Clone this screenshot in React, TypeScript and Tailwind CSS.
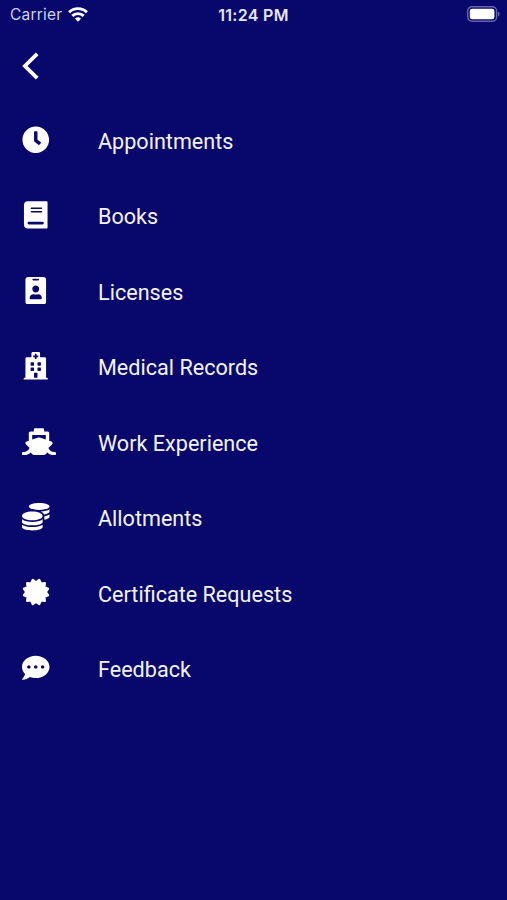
import {
  FaClock,
  FaCoins,
  FaCommentDots,
  FaHospital,
  FaIdBadge,
  FaShip,
} from "react-icons/fa";

function BookIcon({ className }: { className?: string }) {
  return (
    <svg viewBox="0 0 28 28" className={className} fill="none" stroke="#08076b" strokeLinecap="round">
      <path d="M6 .2h19q1 0 1 1V27q0 .9-1 .9H6q-4 0-4-4V4.2q0-4 4-4Z" fill="white" stroke="none" />
      <path d="M9.6 7.3h10.2M9.6 11h10.2" strokeWidth="1.6" />
      <path d="M7 22.5h13.8" strokeWidth="2.8" />
    </svg>
  );
}

// Twelve-toothed seal with blunt tips
function SealIcon({ className }: { className?: string }) {
  return (
    <svg viewBox="-14 -14 28 28" className={className} fill="white" stroke="white" strokeWidth="2.4" strokeLinejoin="round">
      <path d="M0-9.6 3.2-12 5-8.3 8.8-8.8 8.3-5 12-3.2 9.6 0 12 3.2 8.3 5 8.8 8.8 5 8.3 3.2 12 0 9.6-3.2 12-5 8.3-8.8 8.8-8.3 5-12 3.2-9.6 0-12-3.2-8.3-5-8.8-8.8-5-8.3-3.2-12Z" />
    </svg>
  );
}

const items = [
  { label: "Appointments", Icon: FaClock, size: "size-[27.5px]" },
  { label: "Books", Icon: BookIcon, size: "size-[27.5px]" },
  { label: "Licenses", Icon: FaIdBadge, size: "size-[27.5px]" },
  { label: "Medical Records", Icon: FaHospital, size: "size-[27.5px]" },
  { label: "Work Experience", Icon: FaShip, size: "h-[27.5px] w-[34px]" },
  { label: "Allotments", Icon: FaCoins, size: "size-[27.5px]" },
  { label: "Certificate Requests", Icon: SealIcon, size: "size-[28px]" },
  { label: "Feedback", Icon: FaCommentDots, size: "size-[27.5px]" },
];

function StatusBar() {
  return (
    <header className="grid h-[30px] grid-cols-3 items-center pr-[7px] pl-[10px] font-[Inter,sans-serif] text-[15.5px]">
      <div className="flex items-center gap-[6px] text-[#d0d0ee]">
        <span className="tracking-[0.2px]">Carrier</span>
        <svg viewBox="0 0 20 15" className="mb-px h-[15px] w-5" fill="none" stroke="white" strokeWidth="2.9">
          <path d="M1.1 5.3a12.7 12.7 0 0 1 17.8 0" />
          <path d="M4.3 8.9a8.2 8.2 0 0 1 11.4 0" />
          <path d="M10 14.8 7 11.7a4.3 4.3 0 0 1 6 0Z" fill="white" stroke="none" />
        </svg>
      </div>
      <span className="pr-[3px] text-center text-[16px] font-semibold tracking-[0.3px] whitespace-nowrap text-[#e6e6fa]">
        11:24 PM
      </span>
      <svg viewBox="0 0 33 16" className="mb-[2px] h-4 w-[33px] justify-self-end">
        <rect x="0.7" y="0.7" width="28.9" height="14.6" rx="4.2" fill="none" stroke="#6664ae" strokeWidth="1.4" />
        <rect x="2.8" y="2.7" width="24.6" height="10.6" rx="2.3" fill="white" />
        <path d="M30.9 5.4q1.7.8 1.7 2.6t-1.7 2.6Z" fill="#6664ae" />
      </svg>
    </header>
  );
}

export default function App() {
  return (
    <main className="h-[900px] w-[507px] overflow-hidden bg-[#08076b] font-[Roboto,sans-serif] text-white">
      <StatusBar />
      <nav className="h-[74px] pt-[22px] pl-[22px]">
        <button type="button" aria-label="Back" className="block">
          <svg viewBox="0 0 18 28" className="h-7 w-[18px]" fill="none" stroke="white" strokeWidth="3.8">
            <path d="M15.2 1.8 2.9 14l12.3 12.2" />
          </svg>
        </button>
      </nav>
      <ul>
        {items.map(({ label, Icon, size }) => (
          <li key={label} className="flex h-[75.5px] items-center pl-[22px]">
            <div className="w-[76px] pb-[5px]">
              <Icon className={size} />
            </div>
            <span className="text-[21.6px] text-[#f3f3ff]">{label}</span>
          </li>
        ))}
      </ul>
    </main>
  );
}
